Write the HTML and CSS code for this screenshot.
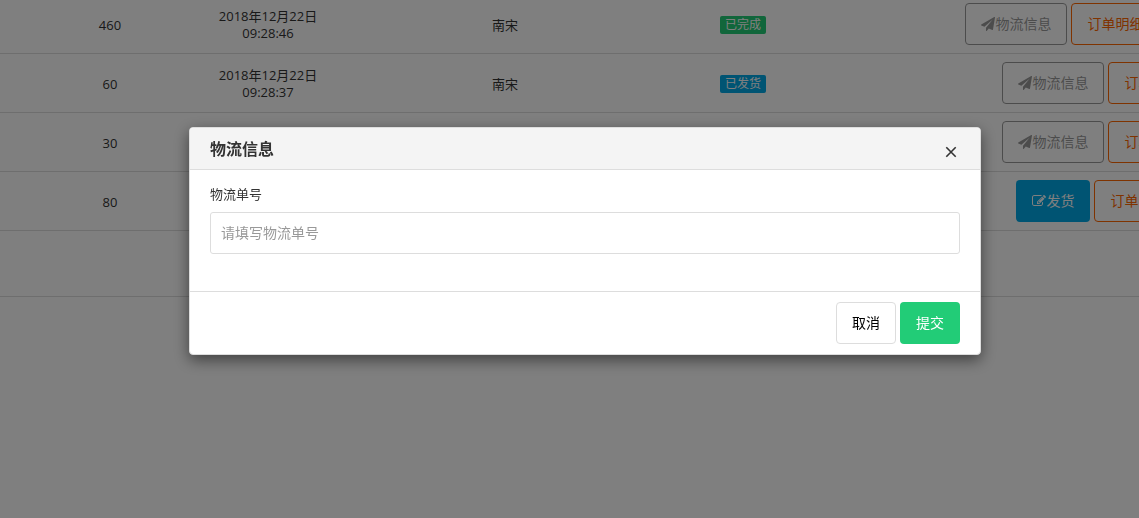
FILE: index.html
```html
<!DOCTYPE html>
<html lang="zh-CN">
<head>
<meta charset="utf-8">
<title>物流信息</title>
<link rel="stylesheet" href="styles.css">
</head>
<body>
<svg class="sprite" aria-hidden="true">
  <symbol id="plane" viewBox="0 0 1792 1792"><path d="M1764 11q33 24 27 64l-256 1536q-5 29-32 45-14 8-31 8-11 0-24-5l-453-185-242 295q-18 23-49 23-13 0-22-4-19-7-30.500-23.500t-11.500-36.500v-349l864-1059-1069 925-395-162q-37-14-40-55-2-40 32-59l1664-960q15-9 32-9 20 0 36 11z"/></symbol>
  <symbol id="edit" viewBox="0 0 1792 1792"><path d="M888 1184l116-116-152-152-116 116v56h96v96h56zm440-720q-16-16-33 1l-350 350q-17 17-1 33t33-1l350-350q17-17 1-33zm80 594v190q0 119-84.500 203.500t-203.500 84.500h-832q-119 0-203.500-84.500t-84.500-203.500v-832q0-119 84.500-203.500t203.500-84.500h832q63 0 117 25 15 7 18 23 3 17-9 29l-49 49q-14 14-32 8-23-6-45-6h-832q-66 0-113 47t-47 113v832q0 66 47 113t113 47h832q66 0 113-47t47-113v-126q0-13 9-22l64-64q15-15 35-7t20 29zm-96-738l288 288-672 672h-288v-288zm444 132l-92 92-288-288 92-92q28-28 68-28t68 28l152 152q28 28 28 68t-28 68z"/></symbol>
</svg>
<main class="page">
  <table class="orders">
    <colgroup>
      <col class="col-amount"><col class="col-time"><col class="col-name"><col class="col-status"><col class="col-actions">
    </colgroup>
    <tbody>
      <tr>
        <td class="amount">460</td>
        <td>2018年12月22日<br>09:28:46</td>
        <td>南宋</td>
        <td><span class="badge badge-done">已完成</span></td>
        <td class="actions-cell"><div class="actions actions-wide">
          <button type="button" class="btn btn-muted"><svg class="icon" aria-hidden="true"><use href="#plane"/></svg>物流信息</button>
          <button type="button" class="btn btn-orange">订单明细</button>
        </div></td>
      </tr>
      <tr>
        <td class="amount">60</td>
        <td>2018年12月22日<br>09:28:37</td>
        <td>南宋</td>
        <td><span class="badge badge-sent">已发货</span></td>
        <td class="actions-cell"><div class="actions">
          <button type="button" class="btn btn-muted"><svg class="icon" aria-hidden="true"><use href="#plane"/></svg>物流信息</button>
          <button type="button" class="btn btn-orange">订单明细</button>
        </div></td>
      </tr>
      <tr>
        <td class="amount">30</td>
        <td></td><td></td><td></td>
        <td class="actions-cell"><div class="actions">
          <button type="button" class="btn btn-muted"><svg class="icon" aria-hidden="true"><use href="#plane"/></svg>物流信息</button>
          <button type="button" class="btn btn-orange">订单明细</button>
        </div></td>
      </tr>
      <tr>
        <td class="amount">80</td>
        <td></td><td></td><td></td>
        <td class="actions-cell"><div class="actions">
          <button type="button" class="btn btn-blue"><svg class="icon" aria-hidden="true"><use href="#edit"/></svg>发货</button>
          <button type="button" class="btn btn-orange">订单明细</button>
        </div></td>
      </tr>
    </tbody>
    <tfoot>
      <tr><td class="pager" colspan="5"></td></tr>
    </tfoot>
  </table>
</main>
<div class="overlay">
  <form class="modal" role="dialog" aria-labelledby="modal-title">
    <header class="modal-header">
      <h1 class="modal-title" id="modal-title">物流信息</h1>
      <button type="button" class="close" aria-label="关闭"><svg class="close-icon" viewBox="0 0 12 12" aria-hidden="true"><path d="M1.300 1.300L10.700 10.700M10.700 1.300L1.300 10.700"/></svg></button>
    </header>
    <div class="modal-body">
      <label class="label" for="tracking">物流单号</label>
      <input class="input" id="tracking" type="text" placeholder="请填写物流单号">
    </div>
    <footer class="modal-footer">
      <button type="button" class="btn btn-plain">取消</button>
      <button type="submit" class="btn btn-green">提交</button>
    </footer>
  </form>
</div>
</body>
</html>
```
FILE: styles.css
```css
* { box-sizing: border-box; }

body {
  margin: 0;
  background: #fff;
  color: #333;
  font: 13px/17px "Open Sans", "Noto Sans CJK SC", sans-serif;
}

button, input { font-family: inherit; }

.sprite { display: none; }

.page {
  height: 100vh;
  overflow: hidden;
}

/* The list is scrolled slightly and runs past the right edge. */
.orders {
  width: 120%;
  margin-top: -5px;
  table-layout: fixed;
  border-collapse: separate;
  border-spacing: 0;
}

.col-amount { width: 180px; }
.col-time { width: 176px; }
.col-name { width: 298px; }
.col-status { width: 178px; }

.orders td {
  height: 59px;
  padding: 10px 0 8px;
  border-bottom: 1px solid #ddd;
  text-align: center;
  vertical-align: middle;
}

.orders .amount { padding-left: 40px; }
.orders .actions-cell { padding: 8px 0; }
.orders .pager { height: 66px; }

.badge {
  display: inline-block;
  padding: 0 5px;
  border-radius: 2px;
  color: #fff;
  font-size: 12px;
  line-height: 18px;
  vertical-align: middle;
}

.badge-done { background: #2c7; }
.badge-sent { background: #00a8e6; }

.actions {
  display: flex;
  justify-content: center;
  gap: 4px;
}

.actions-wide { padding-right: 74px; }

.btn {
  display: inline-flex;
  align-items: center;
  height: 42px;
  padding: 0 15px;
  border: 1px solid transparent;
  border-radius: 4px;
  background: transparent;
  font-size: 14px;
  line-height: 20px;
  white-space: nowrap;
}

.icon {
  width: 14px;
  height: 14px;
  fill: currentColor;
}

.btn-muted { border-color: #999; color: #999; }
.btn-orange { border-color: #f60; color: #f60; }
.btn-blue { background: #00a8e6; color: #fff; }
.btn-plain { border-color: #ddd; background: #fff; color: #000; }
.btn-green { background: #2c7; color: #fff; }

.overlay {
  position: fixed;
  inset: 0;
  padding: 127px 0 0 31px;
  background: rgba(0, 0, 0, 0.5);
}

.modal {
  max-width: 792px;
  margin: 0 auto;
  overflow: hidden;
  border: 1px solid #ddd;
  border-radius: 4px;
  background: #fff;
  box-shadow: 0 5px 15px rgba(0, 0, 0, 0.5);
}

.modal-header {
  display: flex;
  align-items: center;
  justify-content: space-between;
  padding: 11px 20px 9px;
  border-bottom: 1px solid #ddd;
  background: #f4f4f4;
}

.modal-title {
  margin: 0;
  font-size: 16px;
  font-weight: 700;
  line-height: 21px;
}

.close {
  display: flex;
  padding: 4px 3px 0;
  border: 0;
  background: none;
  color: #333;
}

.close-icon {
  width: 12px;
  height: 12px;
  fill: none;
  stroke: currentColor;
  stroke-width: 1.6;
}

.modal-body { padding: 14px 20px 37px; }

.label {
  display: block;
  margin-bottom: 7px;
  line-height: 21px;
}

.input {
  display: block;
  width: 100%;
  height: 42px;
  padding: 0 10px 1px;
  border: 1px solid #ddd;
  border-radius: 3px;
  background: #fff;
  color: #333;
  font-size: 14px;
}

.input::placeholder { color: #999; }

.modal-footer {
  display: flex;
  justify-content: flex-end;
  gap: 4px;
  padding: 10px 20px;
  border-top: 1px solid #ddd;
}
```
